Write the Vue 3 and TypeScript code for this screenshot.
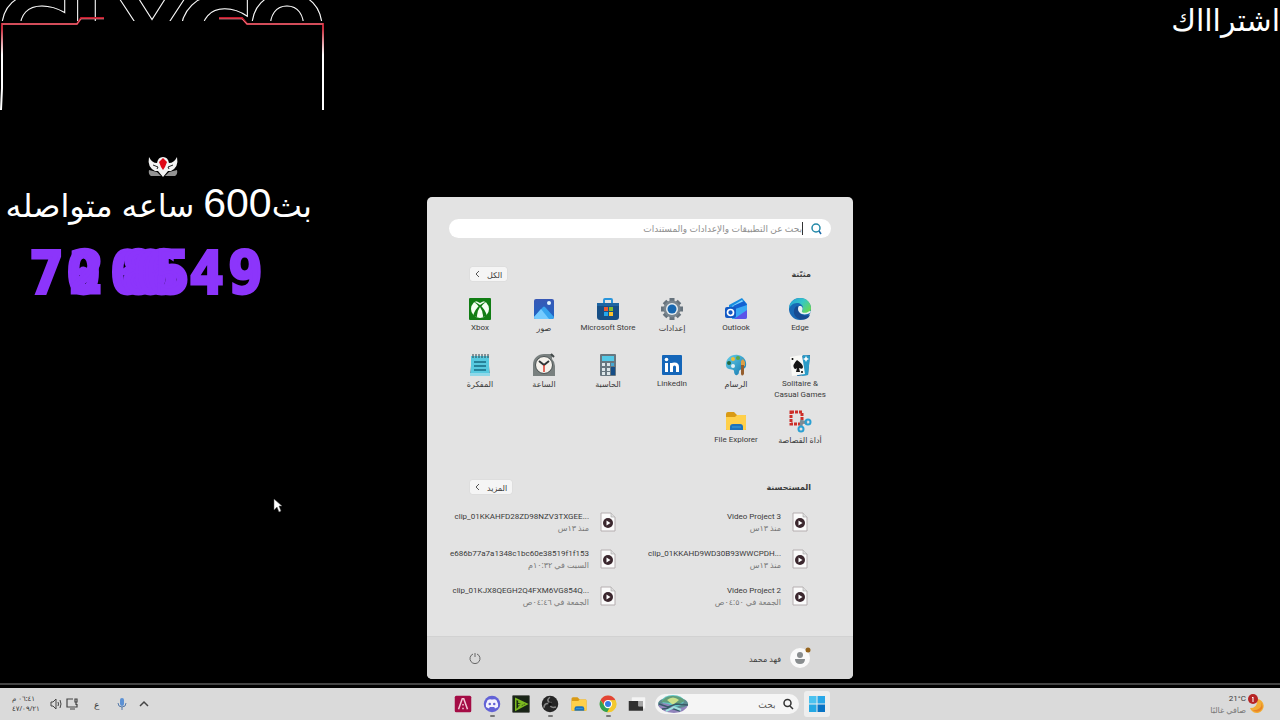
<script setup lang="ts">
import { ref } from 'vue'

interface PinnedApp { name: string; icon: string; latin?: boolean }
interface RecentFile { name: string; when: string }
interface TaskApp { name: string; icon: string; running?: boolean }

const query = ref('')
const taskQuery = ref('')

const folder = `<path d="M2 5q0-2 2-2h6l3 3h8q1 0 1 2v12q0 1-1 1H3q-1 0-1-1z" fill="#d99a15"/><path d="M2 8h9l2-2h8q1 0 1 1v13q0 1-1 1H3q-1 0-1-1z" fill="#ffd04a"/><path d="M6 21v-3q0-3 3-3h7q3 0 3 3v3z" fill="#1d72bd"/><path d="M8 18h9" stroke="#3ba0e0" stroke-width="1"/>`

const icons: Record<string, string> = {
  edge: `<defs><linearGradient id="eg" x1="0" y1="0" x2="1" y2=".6"><stop offset="0" stop-color="#239bd7"/><stop offset=".55" stop-color="#35c6c8"/><stop offset="1" stop-color="#66d85a"/></linearGradient></defs><circle cx="12" cy="12" r="11" fill="#1768b4"/><path d="M1 12C1 5 6 1 12 1c7 0 11 5 11 10 0 4-3 6-6 6-3 0-4-1-4-2 0-1 2-1 2-4 0-3-3-5-6-5-4 0-7 3-8 6z" fill="url(#eg)"/><path d="M9 9c-4 2-4 8-1 11 3 3 7 3 10 2 2-1 3-2 4-4-3 1-8 1-10-2-2-2-2-4-1-6z" fill="#164b91"/><path d="M11 9c-2 2-1 7 3 8 3 1 6 0 8-1 2-2 0-3-2-1-4 2-7 0-6-1 1-2 1-4-1-5z" fill="#e8f2f4"/>`,
  outlook: `<path d="M5 8 18 1l5 6v12H5z" fill="#168ce0"/><path d="m8 9 10-6 4 5-7 7z" fill="#83d5ff"/><path d="m9 9 11-5 3 4-10 9z" fill="#1261d2"/><path d="M8 13 23 8v12q0 2-2 2H8z" fill="#38a9f4"/><path d="m10 22 13-9v7q0 2-2 2z" fill="#5b54e9"/><rect x="1" y="10" width="11" height="11" rx="2" fill="#1259c4"/><circle cx="6.500" cy="15.500" r="3" fill="none" stroke="#fff" stroke-width="1.700"/>`,
  settings: `<g stroke="#66727c" stroke-width="5"><path d="M12 1v22M1 12h22M4.500 4.500l15 15M19.500 4.500l-15 15"/></g><circle cx="12" cy="12" r="8.500" fill="#79858e"/><circle cx="12" cy="12" r="6" fill="#e7edf0"/><circle cx="12" cy="12" r="4.500" fill="#1767b0"/>`,
  store: `<path d="M8 6V3q0-1 1-1h6q1 0 1 1v3" fill="none" stroke="#2995db" stroke-width="2"/><path d="M1 6h22v14q0 3-3 3H4q-3 0-3-3z" fill="#174f86"/><path d="M1 6h22v3H1z" fill="#1e65a2"/><path d="M8 10h4v4H8z" fill="#ed5932"/><path d="M13 10h4v4h-4z" fill="#80bd2e"/><path d="M8 15h4v4H8z" fill="#25a7eb"/><path d="M13 15h4v4h-4z" fill="#ffc22b"/>`,
  photos: `<defs><linearGradient id="ph" x2="0" y2="1"><stop stop-color="#3858b5"/><stop offset="1" stop-color="#1f65c4"/></linearGradient></defs><rect x="2" y="2" width="20" height="20" rx="2" fill="url(#ph)"/><path d="M2 20 11 10q1-1 2 0l9 10q0 2-2 2H4q-2 0-2-2z" fill="#38a5ef"/><path d="m2 20 7-8 8 10H4q-2 0-2-2z" fill="#75cbff"/><circle cx="17" cy="6" r="2" fill="#e2f5ff"/>`,
  xbox: `<rect x="1" y="1" width="22" height="22" rx="1" fill="#117d14"/><circle cx="12" cy="12" r="9" fill="#f4fff3"/><path d="M6 4q3 0 6 2 3-2 6-2l-1-2H7z" fill="#117d14"/><path d="M12 8Q8 5 6 5q7 4 9 15l4-1Q17 12 12 8z" fill="#117d14"/><path d="M12 8q4-3 6-3-7 4-9 15l-4-1Q7 12 12 8z" fill="#117d14"/><path d="M12 10q3 4 3 9-3 2-6 0 0-5 3-9z" fill="#f4fff3"/>`,
  cards: `<path d="m12 3 10-1-2 20-11 1z" fill="#196aa2"/><path d="m15 2 7 1-2 19-6 1z" fill="#2a9bc7"/><path d="m17 5 1-2 1 2 2 1-2 1-1 2-1-2-2-1z" fill="#fff"/><path d="m2 4 12-2 3 19-13 2z" fill="#f9f9f6"/><path d="M9 7Q4 12 6 15q1 2 3 0l-1 4h4l-1-4q4 2 4-1 0-3-6-7z" fill="#151515"/><circle cx="4.500" cy="6" r="1"/><circle cx="14" cy="19" r="1"/>`,
  paint: `<defs><linearGradient id="pa" x2="1" y2="1"><stop stop-color="#64d0e8"/><stop offset="1" stop-color="#1475ae"/></linearGradient></defs><path d="M2 13C1 6 7 1 14 2c6 1 9 6 8 11-1 4-4 2-6 4-2 1 0 4-3 5-2 1-3-2-3-4 0-3-7 0-8-5z" fill="url(#pa)"/><circle cx="5" cy="10" r="2" fill="#246a42"/><circle cx="9" cy="6" r="2" fill="#f2bd34"/><circle cx="14" cy="5" r="2" fill="#5ba84b"/><circle cx="9" cy="13" r="2" fill="#e2eff2"/><path d="m17 8 2-2 2 3v4h-4z" fill="#db9f47"/><path d="M17 12h3v9q-2 3-3 0z" fill="#965f2e"/>`,
  linkedin: `<rect x="2" y="2" width="20" height="20" rx="1" fill="#1466b9"/><rect x="5" y="10" width="3" height="9" fill="#fff"/><circle cx="6.500" cy="6.500" r="1.800" fill="#fff"/><path d="M11.500 19v-9M11.500 14q0-3 3-3t3 3v5" fill="none" stroke="#fff" stroke-width="3"/>`,
  calculator: `<rect x="4" y="1" width="16" height="22" rx="1" fill="#687780"/><rect x="6" y="3" width="12" height="5" fill="#54c9e7"/><g fill="#dce6e9"><path d="M6 10h3v3H6zm5 0h3v3h-3zm-5 5h3v3H6zm5 0h3v3h-3zm-5 4h3v3H6zm5 0h3v3h-3z"/></g><path d="M15 10h3v3h-3z" fill="#45a8d4"/><path d="M15 14h4v8h-4z" fill="#154d86"/>`,
  clock: `<path d="M1 12C1 5 6 1 12 1h8v5q3 3 3 7v10H1z" fill="#79807f"/><path d="m19 1 3 3" stroke="#414849" stroke-width="2"/><circle cx="12" cy="12" r="8.500" fill="#f5f2ec" stroke="#4a5152"/><path d="m7 8 5 4 5-4" fill="none" stroke="#303637" stroke-width="2"/><path d="M12 12v7" stroke="#df3d2e" stroke-width="1.500"/>`,
  notepad: `<path d="M4 3h16l2 20H2z" fill="#2b8ba8"/><path d="M3 3h18v18H3z" fill="#57c9df"/><path d="M2 20h20v3H2z" fill="#90d8e8"/><path d="M6 9h12M6 13h12M6 17h12" stroke="#176982" stroke-width="1.500"/><path d="M5 1v4m3-4v4m3-4v4m3-4v4m3-4v4m3-4v4" stroke="#2b414a"/>`,
  snip: `<path d="M3 3h11v12H3z" fill="none" stroke="#cd2f29" stroke-width="3" stroke-dasharray="3 1"/><path d="m12 12 7 2M14 11l-1 6" stroke="#7c8b94" stroke-width="3"/><circle cx="20" cy="13" r="2.500" fill="none" stroke="#2ba0d3" stroke-width="2"/><circle cx="13" cy="20" r="2.500" fill="none" stroke="#2ba0d3" stroke-width="2"/>`,
  explorer: folder,
  taskview: `<rect x="5" y="3" width="18" height="15" rx="1" fill="#f4f4f4"/><path d="M1 8h13v7h6v6H1z" fill="#303030"/><path d="M14 8h6v7h-6z" fill="#a5a5a5"/>`,
  chrome: `<circle cx="12" cy="12" r="11" fill="#ecc42a"/><path d="M2 7A11 11 0 0 1 22 7H12L8 14z" fill="#e34435"/><path d="M2 7A11 11 0 0 0 11 23l5-9H7z" fill="#31a252"/><path d="M22 7H12l4 7-5 9A11 11 0 0 0 22 7z" fill="#f3c92f"/><circle cx="12" cy="12" r="5.500" fill="#fff"/><circle cx="12" cy="12" r="4" fill="#347ce4"/>`,
  obs: `<circle cx="12" cy="12" r="11" fill="#252525"/><g fill="none" stroke="#858585" stroke-width="2"><path d="M12 3c-6 4-1 8 2 7"/><path d="M20 16c-7 2-9-2-7-5"/><path d="M4 17c0-6 5-7 8-4"/></g><circle cx="12" cy="12" r="2.500" fill="#111"/>`,
  editor: `<path d="M1 1h22v22H1z" fill="#182416" stroke="#2b302b"/><path d="M5 5v15l15-8zM8 9l8 3M8 13l7-1M8 17l5-4" fill="none" stroke="#7cba20" stroke-width="2"/>`,
  discord: `<circle cx="12" cy="12" r="11" fill="#6262d6"/><path d="M6 7q3-2 5-1h2q3-1 5 1 3 5 2 9l-4 2-1-2H9l-1 2-4-2Q3 12 6 7z" fill="#f3f2fd"/><circle cx="9" cy="12" r="1.700" fill="#6262d6"/><circle cx="15" cy="12" r="1.700" fill="#6262d6"/>`,
  artlist: `<rect x="1" y="1" width="22" height="22" rx="2" fill="#a40c45"/><path d="m6 19 5-14h2l5 14M12 12v2m0 3v2" fill="none" stroke="#f3c8d6" stroke-width="2"/>`,
}

const pinned: PinnedApp[] = [
  { name: 'Edge', icon: 'edge', latin: true },
  { name: 'Outlook', icon: 'outlook', latin: true },
  { name: 'إعدادات', icon: 'settings' },
  { name: 'Microsoft Store', icon: 'store', latin: true },
  { name: 'صور', icon: 'photos' },
  { name: 'Xbox', icon: 'xbox', latin: true },
  { name: 'Solitaire & Casual Games', icon: 'cards', latin: true },
  { name: 'الرسام', icon: 'paint' },
  { name: 'LinkedIn', icon: 'linkedin', latin: true },
  { name: 'الحاسبة', icon: 'calculator' },
  { name: 'الساعة', icon: 'clock' },
  { name: 'المفكرة', icon: 'notepad' },
  { name: 'أداة القصاصة', icon: 'snip' },
  { name: 'File Explorer', icon: 'explorer', latin: true },
]

const recent: RecentFile[] = [
  { name: 'Video Project 3', when: 'منذ ١٣س' },
  { name: 'clip_01KKAHFD28ZD98NZV3TXGEE...', when: 'منذ ١٣س' },
  { name: 'clip_01KKAHD9WD30B93WWCPDH...', when: 'منذ ١٣س' },
  { name: 'e686b77a7a1348c1bc60e38519f1f153', when: 'السبت في ١٠:٣٢م' },
  { name: 'Video Project 2', when: 'الجمعة في ٠٤:٥٠ص' },
  { name: 'clip_01KJX8QEGH2Q4FXM6VG854Q...', when: 'الجمعة في ٠٤:٤٦ص' },
]

const taskApps: TaskApp[] = [
  { name: 'Task View', icon: 'taskview' },
  { name: 'Chrome', icon: 'chrome', running: true },
  { name: 'File Explorer', icon: 'explorer' },
  { name: 'OBS', icon: 'obs', running: true },
  { name: 'Editor', icon: 'editor' },
  { name: 'Discord', icon: 'discord', running: true },
  { name: 'Artlist', icon: 'artlist' },
]

// Counter digits caught mid-roll: each one has its own place along the strip.
const digits = [
  { text: '7', x: 0 }, { text: '0', x: 37 }, { text: '2', x: 40 },
  { text: '0', x: 81 }, { text: '8', x: 92 }, { text: '0', x: 104 },
  { text: '6', x: 114 }, { text: '5', x: 126 },
  { text: '4', x: 160 }, { text: '9', x: 199 },
]
</script>

<template>
  <div class="screen" dir="rtl">
    <main class="stage">
      <section class="overlay">
        <svg class="frame" viewBox="0 0 326 112" aria-hidden="true">
          <defs>
            <linearGradient id="fr" x1="0" y1="18" x2="0" y2="110" gradientUnits="userSpaceOnUse">
              <stop offset="0" stop-color="#c3192b" /><stop offset=".12" stop-color="#c9303f" /><stop offset=".4" stop-color="#fff" />
            </linearGradient>
            <clipPath id="cut"><rect width="326" height="21" /></clipPath>
          </defs>
          <g class="wordmark" clip-path="url(#cut)">
            <text x="-3" y="64">G</text><text x="69" y="64">L</text><text x="118" y="64">Y</text><text class="wide" x="175" y="74">C</text><text x="247" y="64">O</text>
          </g>
          <path d="M1 110 2 88V24H77L81 18H104M219 18H242L247 24H323V110" fill="none" stroke="url(#fr)" stroke-width="2" />
          <path d="M2 24H77L81 19H104M219 19H242L247 24H323" fill="none" stroke="#f0a9ae" stroke-width=".6" />
        </svg>
        <svg class="emblem" viewBox="0 0 32 22" aria-hidden="true">
          <path d="M2 15 10 17 14 21H4Q1 19 2 15M30 15 22 17 18 21H28Q31 19 30 15" fill="#939393" />
          <path d="M2 2Q5 8 10 8q1-6 6-6t6 6q5 0 8-6 2 10-6 14h-3l-5 6-5-6H8Q0 12 2 2z" fill="#f3f3f3" />
          <path d="m6 10 5 2-1 2M26 10l-5 2 1 2" fill="none" stroke="#222" />
          <path d="m16 3 4 4-2 5-2 3-2-3-2-5z" fill="#df0715" />
        </svg>
        <p class="headline">بث<span>600</span> ساعه متواصله</p>
        <div class="counter" dir="ltr">
          <span v-for="(d, i) in digits" :key="i" :style="{ left: d.x + 'px' }">{{ d.text }}</span>
        </div>
      </section>
      <p class="subscribe">اشتراااك</p>
      <svg class="pointer" viewBox="0 0 10 15" aria-hidden="true"><path d="M1 1v11l3-3 2 5 2-1-2-5h3z" fill="#fff" stroke="#555" stroke-width=".5" /></svg>

      <section class="menu">
        <div class="menu-body">
          <label class="search">
            <svg viewBox="0 0 12 12" aria-hidden="true"><circle cx="6" cy="5" r="4" fill="none" stroke="#2389a8" stroke-width="1.500" /><path d="m9 8 2 3" stroke="#1767a8" stroke-width="1.500" /></svg>
            <input v-model="query" type="text" placeholder="بحث عن التطبيقات والإعدادات والمستندات" aria-label="بحث">
          </label>
          <header class="section-head">
            <h2>مثبّتة</h2>
            <button type="button">الكل <svg viewBox="0 0 6 8" aria-hidden="true"><path d="M4 1 1 4l3 3" /></svg></button>
          </header>
          <div class="pinned">
            <button v-for="app in pinned" :key="app.name" type="button" :class="{ latin: app.latin }">
              <svg viewBox="0 0 24 24" aria-hidden="true" v-html="icons[app.icon]" />
              <span :dir="app.latin ? 'ltr' : 'rtl'">{{ app.name }}</span>
            </button>
          </div>
          <header class="section-head second">
            <h2>المستحسنة</h2>
            <button type="button">المزيد <svg viewBox="0 0 6 8" aria-hidden="true"><path d="M4 1 1 4l3 3" /></svg></button>
          </header>
          <div class="recent">
            <button v-for="file in recent" :key="file.name" type="button">
              <svg viewBox="0 0 16 20" aria-hidden="true">
                <path d="M1 1h10l4 4v14H1z" fill="#fafafa" stroke="#b5aeb0" stroke-width="1" /><path d="M11 1v4h4" fill="#ddd" stroke="#aaa" stroke-width=".6" />
                <circle cx="8" cy="11" r="5" fill="#3b272e" /><path d="M6.500 8.500v5l4-2.500z" fill="#fff" />
              </svg>
              <span class="file"><bdi dir="ltr">{{ file.name }}</bdi><small>{{ file.when }}</small></span>
            </button>
          </div>
        </div>
        <footer class="menu-foot">
          <button type="button" class="user">
            <svg viewBox="0 0 22 22" aria-hidden="true"><circle cx="11" cy="11" r="10" fill="#fafafa" /><circle cx="11" cy="8" r="3" fill="#898d8f" /><path d="M6 12h10q0 5-5 5t-5-5z" fill="#898d8f" /><circle cx="19" cy="3" r="2.500" fill="#96641d" /></svg>
            <span>فهد محمد</span>
          </button>
          <button type="button" class="power" aria-label="الطاقة"><svg viewBox="0 0 12 12" aria-hidden="true"><path d="M4 2a5 5 0 1 0 4 0M6 1v4" fill="none" stroke="#666" /></svg></button>
        </footer>
      </section>
    </main>

    <nav class="taskbar">
      <button type="button" class="weather">
        <svg viewBox="0 0 18 20" aria-hidden="true"><path d="M9 5A7 7 0 1 1 2 14Q10 14 9 5z" fill="#f2ad35" /><path d="M12 7q3 4 0 7-4 3-8 2 4 3 8 1 5-4 0-10z" fill="#e98425" /><circle cx="5" cy="5" r="5" fill="#b72525" /><path d="m4 4 1-1v5" fill="none" stroke="#fff" /></svg>
        <span><bdi dir="ltr">21°C</bdi><small>صافي غالبًا</small></span>
      </button>
      <div class="apps">
        <button type="button" class="start" aria-label="ابدأ"><svg viewBox="0 0 16 16" aria-hidden="true"><path d="M0 0h7.500v7.500H0z" fill="#4bc2ef" /><path d="M8.500 0H16v7.500H8.500z" fill="#28a7e8" /><path d="M0 8.500h7.500V16H0z" fill="#25a9e4" /><path d="M8.500 8.500H16V16H8.500z" fill="#0873c5" /></svg></button>
        <label class="task-search">
          <svg class="lens" viewBox="0 0 12 12" aria-hidden="true"><circle cx="5.500" cy="5" r="3.500" fill="none" stroke="#333" stroke-width="1.500" /><path d="m8 8 3 3" stroke="#333" stroke-width="1.500" /></svg>
          <input v-model="taskQuery" type="text" placeholder="بحث" aria-label="بحث">
          <svg class="scene" viewBox="0 0 32 20" aria-hidden="true">
            <ellipse cx="16" cy="10" rx="15" ry="7" fill="#5b8b91" /><ellipse cx="16" cy="7" rx="11" ry="6" fill="#64c9c8" /><path d="M4 8q5-7 12-6 8 0 12 5l-6 3z" fill="#629d7a" /><path d="M10 6q6-5 12 0l-6 5z" fill="#cbe18c" /><path d="M1 11q7-4 14 1t16-1q-2 7-14 8Q4 18 1 11z" fill="#9184bb" /><path d="m2 10 9 3 8-3 12 1M5 15l9-1 9 3" fill="none" stroke="#385a68" stroke-width="1.500" /><path d="m9 17 8-4 7 3" fill="none" stroke="#9fe1df" stroke-width="2" />
          </svg>
        </label>
        <button v-for="app in taskApps" :key="app.name" type="button" class="task" :class="{ running: app.running }" :aria-label="app.name">
          <svg viewBox="0 0 24 24" aria-hidden="true" v-html="icons[app.icon]" />
        </button>
      </div>
      <div class="tray">
        <button type="button" class="chev" aria-label="إظهار الرموز المخفية"><svg viewBox="0 0 12 12" aria-hidden="true"><path d="m2 8 4-4 4 4" fill="none" stroke="#444" stroke-width="1.500" /></svg></button>
        <button type="button" class="mic" aria-label="الميكروفون"><svg viewBox="0 0 12 12" aria-hidden="true"><rect x="4" y="0" width="4" height="8" rx="2" fill="#5c91d4" /><path d="M2 5q0 4 4 4t4-4M6 9v3" fill="none" stroke="#5579a8" /></svg></button>
        <button type="button" class="lang">ع</button>
        <button type="button" class="quick" aria-label="الشبكة والصوت">
          <svg viewBox="0 0 12 12" aria-hidden="true"><path d="M7 1H1v8h10V6M4 11h5M9 1h2v3H9zM10 4v3" fill="none" stroke="#444" stroke-width="1.200" /></svg>
          <svg viewBox="0 0 12 12" aria-hidden="true"><path d="M1 4h2l3-3v10L3 8H1zM8 4q1 2 0 4M10 2q2 4 0 8" fill="none" stroke="#444" /></svg>
        </button>
        <button type="button" class="clock"><span>٠٦:٤١ م</span><span>٤٧/٠٩/٢١</span></button>
      </div>
    </nav>
  </div>
</template>

<style>
body { margin: 0; background: #000; }
</style>

<style scoped>
* { box-sizing: border-box; }
.screen { display: flex; flex-direction: column; min-height: 100vh; overflow: hidden; background: #000; color: #3a3a3a; font-family: "Noto Sans", "DejaVu Sans", sans-serif; font-size: 8px; }
button { padding: 0; border: 0; background: none; color: inherit; font: inherit; }
svg { display: block; flex: none; }
p, h2 { margin: 0; }
.stage { position: relative; display: flex; flex: 1; justify-content: center; align-items: flex-end; padding: 197px 0 4px; }
.overlay { position: absolute; top: 0; left: 0; width: 326px; color: #fff; }
.frame { width: 326px; height: 112px; }
.wordmark { direction: ltr; fill: none; stroke: #fff; stroke-width: 1; font: 700 94px "DejaVu Sans", sans-serif; }
.wide { font-size: 108px; }
.emblem { width: 32px; height: 22px; margin: 43px auto 0; }
.headline { padding-right: 14px; font: 32px/52px "Liberation Sans", "DejaVu Sans", sans-serif; white-space: nowrap; }
.headline span { font-size: 41px; }
.counter { position: relative; height: 64px; margin: 9px 0 0 29px; color: #8c35fb; font: 700 58px/64px "DejaVu Sans Mono", monospace; }
.counter span { position: absolute; top: 0; -webkit-text-stroke: 3px #8c35fb; }
.subscribe { position: absolute; top: 0; right: 0; color: #fff; font: 30px/42px "Liberation Sans", "DejaVu Sans", sans-serif; white-space: nowrap; }
.pointer { position: absolute; top: 498px; left: 273px; width: 10px; height: 15px; }

.menu { position: relative; width: 426px; max-width: 100%; overflow: hidden; border-radius: 5px; background: #e3e3e3; }
.menu-body { padding: 22px 21px 22px; }
.search { display: flex; align-items: center; height: 19px; margin: 0 1px; padding: 0 9px; gap: 7px; border-radius: 10px; background: #fff; }
.search svg { width: 12px; height: 12px; }
input { min-width: 0; padding: 0; border: 0; outline: 0; background: none; color: #333; font: inherit; }
.search input { flex: 1; height: 13px; border-right: 1px solid #333; font-size: 9px; }
input::placeholder { color: #909090; opacity: 1; }
.section-head { display: flex; justify-content: space-between; align-items: center; height: 14px; margin: 29px 21px 16px 22px; }
.section-head.second { margin: 15px 21px 9px 22px; }
h2 { font-size: 8px; line-height: 14px; }
.section-head button { display: flex; align-items: center; height: 14px; padding: 0 5px; gap: 6px; border-radius: 2px; background: #f5f5f5; box-shadow: 0 0 1px #bbb; }
.section-head svg { width: 6px; height: 8px; fill: none; stroke: #555; }
.pinned { display: grid; grid-template-columns: repeat(6, 1fr); grid-auto-rows: 56px; }
.pinned button { display: flex; flex-direction: column; align-items: center; gap: 1px; line-height: 11px; }
.pinned svg { width: 24px; height: 24px; }
.pinned span { max-width: 62px; }
.pinned .latin, bdi { font-family: Roboto, "Open Sans", sans-serif; }
.recent { display: grid; grid-template-columns: 1fr 1fr; grid-auto-rows: 37px; }
.recent button { display: flex; align-items: center; gap: 11px; padding-right: 24px; text-align: right; white-space: nowrap; }
.recent svg { width: 16px; height: 20px; }
.file, .weather span { display: flex; flex-direction: column; align-items: flex-start; line-height: 11px; }
small { color: #777; font-size: 8px; }
.menu-foot { display: flex; justify-content: space-between; align-items: center; height: 43px; padding: 0 42px; border-top: 1px solid #d2d2d2; background: #d9d9d9; }
.user { display: flex; align-items: center; gap: 8px; }
.user svg { width: 22px; height: 22px; }
.power svg { width: 12px; height: 12px; }

.taskbar { display: grid; grid-template-columns: 1fr auto 1fr; align-items: center; height: 37px; padding: 5px 14px 0 12px; background: linear-gradient(#444 0 2px, #000 2px 5px, #dadada 5px); }
.weather { display: flex; align-items: center; gap: 2px; justify-self: start; text-align: right; }
.weather svg { width: 18px; height: 20px; }
.apps { display: flex; align-items: center; }
.start { display: grid; place-items: center; width: 26px; height: 26px; margin-left: 5px; border-radius: 3px; background: #eee; }
.start svg { width: 16px; height: 16px; }
.task-search { display: flex; align-items: center; width: 144px; height: 20px; margin-left: 3px; padding: 0 5px 0 2px; border-radius: 10px; background: #f5f5f5; }
.lens { width: 12px; height: 12px; }
.task-search input { flex: 1; padding-right: 6px; font-size: 9px; }
.task-search input::placeholder { color: #555; }
.scene { width: 32px; height: 20px; }
.task { position: relative; display: grid; place-items: center; width: 29px; height: 32px; }
.task svg { width: 18px; height: 18px; }
.running::after { position: absolute; bottom: 3px; left: 12px; width: 5px; height: 2px; border-radius: 1px; background: #777; content: ""; }
.tray { display: flex; align-items: center; justify-self: end; gap: 10px; }
.tray svg { width: 12px; height: 12px; }
.lang { width: 12px; margin: 0 3px; font-size: 9px; }
.quick { display: flex; gap: 4px; }
.clock { display: flex; flex-direction: column; align-items: flex-end; font-size: 7px; line-height: 10px; white-space: nowrap; }
</style>
